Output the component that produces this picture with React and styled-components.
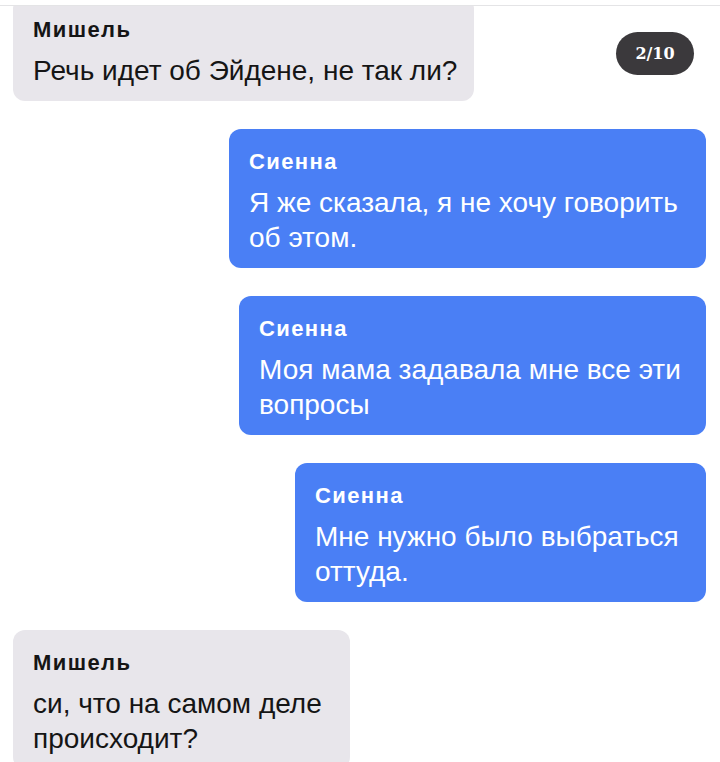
import React from "react";
import styled, { createGlobalStyle } from "styled-components";

const GlobalStyle = createGlobalStyle`
  html, body {
    margin: 0;
    padding: 0;
    background: #ffffff;
  }
  body {
    font-family: "Liberation Sans", Arial, sans-serif;
    -webkit-font-smoothing: antialiased;
  }
`;

const messages = [
  { id: 1, mine: false, name: "Мишель", text: "Речь идет об Эйдене, не так ли?", width: 461 },
  { id: 2, mine: true, name: "Сиенна", text: "Я же сказала, я не хочу говорить об этом.", width: 477 },
  { id: 3, mine: true, name: "Сиенна", text: "Моя мама задавала мне все эти вопросы", width: 467 },
  { id: 4, mine: true, name: "Сиенна", text: "Мне нужно было выбраться оттуда.", width: 411 },
  { id: 5, mine: false, name: "Мишель", text: "си, что на самом деле происходит?", width: 337 },
];

const App = () => {
  return (
    <>
      <GlobalStyle />
      <Screen>
        <Feed>
          <List>
            {messages.map((m) => (
              <Row key={m.id} mine={m.mine}>
                <Bubble mine={m.mine} w={m.width}>
                  <Name>{m.name}</Name>
                  <Text>{m.text}</Text>
                </Bubble>
              </Row>
            ))}
          </List>
          <Counter>2/10</Counter>
        </Feed>
      </Screen>
    </>
  );
};

const Screen = styled.div`
  width: 720px;
  height: 762px;
  padding-top: 5px;
  box-sizing: border-box;
  overflow: hidden;
  background: #ffffff;
`;

const Feed = styled.div`
  position: relative;
  height: 757px;
  border-top: 1px solid #e4e4e6;
  overflow: hidden;
`;

const List = styled.div`
  display: flex;
  flex-direction: column;
  gap: 28px;
  margin-top: -9px;
  padding: 0 14px 0 13px;
`;

const Row = styled.div`
  display: flex;
  justify-content: ${(p) => (p.mine ? "flex-end" : "flex-start")};
`;

const Bubble = styled.div`
  width: ${(p) => p.w}px;
  box-sizing: border-box;
  padding: 20px 14px 13px 20px;
  border-radius: 12px;
  background: ${(p) => (p.mine ? "#4a7ff5" : "#e8e6eb")};
  color: ${(p) => (p.mine ? "#ffffff" : "#151515")};
`;

const Name = styled.div`
  font-size: 22px;
  font-weight: 700;
  letter-spacing: 1.4px;
  line-height: 26px;
  margin-bottom: 10px;
`;

const Text = styled.div`
  font-size: 28px;
  line-height: 35px;
`;

const Counter = styled.div`
  position: absolute;
  top: 26px;
  left: 616px;
  width: 78px;
  height: 43px;
  border-radius: 22px;
  background: #3b393c;
  color: #ffffff;
  font-family: "DejaVu Serif", Georgia, serif;
  font-weight: 700;
  font-size: 16px;
  display: flex;
  align-items: center;
  justify-content: center;
`;

export default App;
